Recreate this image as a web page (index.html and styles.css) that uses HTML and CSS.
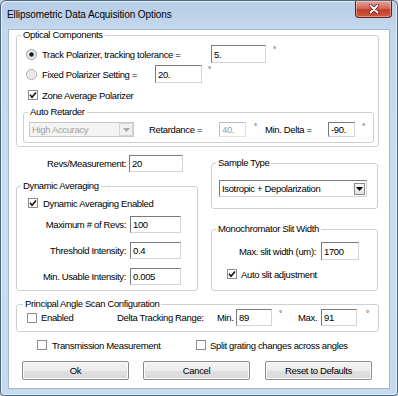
FILE: index.html
```html
<!DOCTYPE html>
<html>
<head>
<meta charset="utf-8">
<title>Ellipsometric Data Acquisition Options</title>
<link rel="stylesheet" href="styles.css">
</head>
<body>
<div class="window">
  <div class="titlebar">
    <span class="title">Ellipsometric Data Acquisition Options</span>
    <span class="close"><svg width="14" height="10" viewBox="0 0 14 10"><path d="M3.5 1.5 L10.5 8.5 M10.5 1.5 L3.5 8.5" stroke="#5a1410" stroke-width="3.2" stroke-linecap="round"/><path d="M3.5 1.5 L10.5 8.5 M10.5 1.5 L3.5 8.5" stroke="#fff" stroke-width="2" stroke-linecap="round"/></svg></span>
  </div>
  <div class="client">
    <fieldset class="group optical">
      <legend>Optical Components</legend>
      <div class="row r-track">
        <svg class="radio" width="11" height="11" viewBox="0 0 11 11"><circle cx="5.5" cy="5.5" r="5" fill="#f2f2f2" stroke="#9a9a9a"/><circle cx="5.5" cy="5.5" r="3.6" fill="#e4e4e4"/><circle cx="5.5" cy="5.5" r="2.2" fill="#1c1c1c"/></svg>
        <span class="lbl w-track">Track Polarizer, tracking tolerance =</span>
        <span class="edit w-tol">5.</span>
        <span class="deg d-tol">°</span>
      </div>
      <div class="row r-fixed">
        <svg class="radio" width="11" height="11" viewBox="0 0 11 11"><circle cx="5.5" cy="5.5" r="5" fill="#f2f2f2" stroke="#a6a6a6"/><circle cx="5.5" cy="5.5" r="3.6" fill="#e8e8e8"/></svg>
        <span class="lbl w-fixed">Fixed Polarizer Setting =</span>
        <span class="edit w-fix">20.</span>
        <span class="deg d-fix">°</span>
      </div>
      <div class="row r-zone">
        <svg class="cb cb-zone" width="10" height="10" viewBox="0 0 10 10"><rect x="0.5" y="0.5" width="9" height="9" fill="#fff" stroke="#8c8c8c"/><path d="M2 4.8 L4 7.2 L8 2.4" fill="none" stroke="#111" stroke-width="1.6"/></svg>
        <span class="lbl">Zone Average Polarizer</span>
      </div>
      <fieldset class="group retarder">
        <legend>Auto Retarder</legend>
        <div class="row r-ret">
          <span class="combo disabled w-acc"><span class="combo-text">High Accuracy</span><span class="combo-btn"><svg width="7" height="4" viewBox="0 0 7 4"><path d="M0 0 H7 L3.5 4 Z" fill="#a8a8a8"/></svg></span></span>
          <span class="lbl w-retl">Retardance =</span>
          <span class="edit disabled w-ret">40.</span>
          <span class="deg d-ret">°</span>
          <span class="lbl w-mdl">Min. Delta =</span>
          <span class="edit w-ret">-90.</span>
          <span class="deg d-md">°</span>
        </div>
      </fieldset>
    </fieldset>

    <div class="middle">
      <div class="col-left">
        <div class="row r-revs">
          <span class="lbl rlabel w-revs">Revs/Measurement:</span>
          <span class="edit w-revsin">20</span>
        </div>
        <fieldset class="group dyn">
          <legend>Dynamic Averaging</legend>
          <div class="row r-dyncb">
            <svg class="cb cb-dyn" width="10" height="10" viewBox="0 0 10 10"><rect x="0.5" y="0.5" width="9" height="9" fill="#fff" stroke="#8c8c8c"/><path d="M2 4.8 L4 7.2 L8 2.4" fill="none" stroke="#111" stroke-width="1.6"/></svg>
            <span class="lbl">Dynamic Averaging Enabled</span>
          </div>
          <div class="row r-dyn r-first">
            <span class="lbl rlabel w-dyn">Maximum # of Revs:</span>
            <span class="edit w-dynin">100</span>
          </div>
          <div class="row r-dyn">
            <span class="lbl rlabel w-dyn">Threshold Intensity:</span>
            <span class="edit w-dynin">0.4</span>
          </div>
          <div class="row r-dyn">
            <span class="lbl rlabel w-dyn">Min. Usable Intensity:</span>
            <span class="edit w-dynin">0.005</span>
          </div>
        </fieldset>
      </div>
      <div class="col-right">
        <fieldset class="group sample">
          <legend>Sample Type</legend>
          <span class="combo w-sample"><span class="combo-text">Isotropic + Depolarization</span><span class="combo-btn"><svg width="7" height="4" viewBox="0 0 7 4"><path d="M0 0 H7 L3.5 4 Z" fill="#000"/></svg></span></span>
        </fieldset>
        <fieldset class="group mono">
          <legend>Monochromator Slit Width</legend>
          <div class="row r-slit">
            <span class="lbl rlabel w-slit">Max. slit width (um):</span>
            <span class="edit w-slitin">1700</span>
          </div>
          <div class="row r-auto">
            <svg class="cb cb-auto" width="10" height="10" viewBox="0 0 10 10"><rect x="0.5" y="0.5" width="9" height="9" fill="#fff" stroke="#8c8c8c"/><path d="M2 4.8 L4 7.2 L8 2.4" fill="none" stroke="#111" stroke-width="1.6"/></svg>
            <span class="lbl">Auto slit adjustment</span>
          </div>
        </fieldset>
      </div>
    </div>

    <fieldset class="group principal">
      <legend>Principal Angle Scan Configuration</legend>
      <div class="row r-pa">
        <svg class="cb cb-en" width="10" height="10" viewBox="0 0 10 10"><rect x="0.5" y="0.5" width="9" height="9" fill="#fff" stroke="#8c8c8c"/></svg>
        <span class="lbl w-en">Enabled</span>
        <span class="lbl w-dtr">Delta Tracking Range:</span>
        <span class="lbl w-min">Min.</span>
        <span class="edit w-pa">89</span>
        <span class="deg d-pa">°</span>
        <span class="lbl w-max">Max.</span>
        <span class="edit w-pa">91</span>
        <span class="deg d-pa2">°</span>
      </div>
    </fieldset>

    <div class="row r-checks">
      <svg class="cb cb-trans" width="10" height="10" viewBox="0 0 10 10"><rect x="0.5" y="0.5" width="9" height="9" fill="#fff" stroke="#8c8c8c"/></svg>
      <span class="lbl w-trans">Transmission Measurement</span>
      <svg class="cb" width="10" height="10" viewBox="0 0 10 10"><rect x="0.5" y="0.5" width="9" height="9" fill="#fff" stroke="#8c8c8c"/></svg>
      <span class="lbl l-split">Split grating changes across angles</span>
    </div>

    <div class="buttons">
      <span class="btn b-ok">Ok</span>
      <span class="btn b-cancel">Cancel</span>
      <span class="btn b-reset">Reset to Defaults</span>
    </div>
  </div>
</div>
</body>
</html>
```

FILE: styles.css
```css
* { box-sizing: border-box; }
html, body { margin: 0; padding: 0; }
body {
  width: 398px;
  height: 396px;
  overflow: hidden;
  background: #c9d1da;
  font-family: "Liberation Sans", Arial, sans-serif;
  font-size: 9.5px;
  letter-spacing: -0.35px;
  color: #000;
}
.window {
  width: 398px;
  height: 396px;
  border: 1px solid #4f6680;
  border-radius: 6px 6px 4px 4px;
  background: linear-gradient(180deg, #b6cde6 0px, #c4d8ee 30px, #cadcf0 200px, #c6daef 396px);
  box-shadow: inset 1px 1px 0 #e6f0fa, inset -1px -1px 0 #e6f0fa;
}
.titlebar {
  height: 28px;
  display: flex;
  align-items: flex-start;
  padding-left: 6px;
}
.title {
  margin-top: 7px;
  font-size: 10px;
  line-height: 13px;
  letter-spacing: -0.1px;
  color: #000;
}
.close {
  margin-left: auto;
  margin-right: 5px;
  width: 37px;
  height: 17px;
  border: 1px solid #6b1e17;
  border-top: none;
  border-radius: 0 0 4px 4px;
  background: linear-gradient(180deg, #e6a395 0%, #d5695a 45%, #c13d2c 55%, #cf5a3e 100%);
  display: flex;
  align-items: center;
  justify-content: center;
  box-shadow: inset 0 0 0 1px rgba(255,255,255,0.35);
}
.client {
  margin: 0 7px;
  width: 382px;
  height: 360px;
  border: 1px solid #a4b8ce;
  background: #ffffff;
  padding: 0 10px 0 7px;
}
.group {
  margin: 0;
  padding: 0;
  min-width: 0;
  border: 1px solid #cdd1d4;
  border-radius: 3px;
}
.group > legend {
  padding: 0 2px;
  margin-left: 4px;
  height: 10px;
  line-height: 10px;
}
.row {
  display: flex;
  align-items: center;
}
.lbl { white-space: nowrap; line-height: 11px; }
.rlabel { text-align: right; }
.edit {
  height: 17px;
  background: #fff;
  border: 1px solid;
  border-color: #7a7a7a #d4d4d4 #d4d4d4 #7a7a7a;
  padding-left: 2px;
  line-height: 13px;
  display: flex;
  align-items: center;
  white-space: nowrap;
}
.edit.disabled {
  color: #9c9c9c;
  border-color: #bdbdbd #e2e2e2 #e2e2e2 #bdbdbd;
}
.deg {
  align-self: flex-start;
  line-height: 8px;
  font-size: 8px;
  margin-top: 1px;
}
.cb, .radio { flex: none; display: block; }

/* Optical components */
.optical { padding: 0 4px 3px 0; }
.r-track { margin-top: 5px; height: 18px; }
.r-track .edit, .r-fixed .edit { height: 18px; }
.radio { margin-left: 9px; margin-right: 5px; }
.w-track { width: 169px; }
.w-tol { width: 55px; }
.d-tol { margin-left: 7px; }
.r-fixed { margin-top: 2px; height: 18px; }
.w-fixed { width: 113px; }
.w-fix { width: 47px; }
.d-fix { margin-left: 6px; }
.r-zone { margin-top: 3px; height: 18px; }
.cb-zone { margin-left: 11px; margin-right: 4px; }

.retarder { margin: 3px 0 0 6px; padding: 0 0 5px 0; }
.r-ret { margin-top: 5px; height: 15px; }
.r-ret .edit { height: 15px; }
.w-acc { margin-left: 5px; width: 105px; }
.w-retl { width: 70px; margin-left: 15px; }
.w-ret { width: 27px; }
.d-ret { width: 19px; padding-left: 8px; }
.w-mdl { width: 63px; }
.d-md { padding-left: 7px; }

.combo {
  display: flex;
  align-items: center;
  height: 15px;
  border: 1px solid;
  border-color: #7a7a7a #d4d4d4 #d4d4d4 #7a7a7a;
  background: #fff;
}
.combo-text { flex: 1; padding-left: 2px; white-space: nowrap; line-height: 11px; }
.combo-btn {
  width: 12px;
  height: 11px;
  margin-right: 1px;
  border: 1px solid #b5b5b5;
  background: linear-gradient(180deg, #f6f6f6, #e3e3e3);
  display: flex;
  align-items: center;
  justify-content: center;
}
.combo.disabled {
  color: #a3a3a3;
  background: #f4f4f4;
  border-color: #c8c8c8;
}
.combo.disabled .combo-btn {
  border-color: #d6d6d6;
  background: #f0f0f0;
  height: 13px;
  width: 14px;
  margin-right: 0;
}

/* Middle */
.middle { display: flex; }
.col-left { width: 182px; }
.col-right { width: 167px; margin-left: 13px; }
.r-revs { margin-top: 8px; height: 17px; }
.w-revs { width: 110px; margin-right: 3px; }
.w-revsin { width: 54px; }

.dyn { margin-top: 9px; padding: 0 0 5px 0; }
.r-dyncb { margin-top: 3px; height: 18px; }
.cb-dyn { margin-left: 11px; margin-right: 5px; }
.r-dyn { margin-top: 9px; height: 17px; }
.r-dyn.r-first { margin-top: 4px; }
.w-dyn { width: 109px; margin-right: 4px; }
.w-dynin { width: 51px; }

.sample { margin-top: 11px; padding: 0 0 11px 0; }
.w-sample { margin: 12px 0 0 7px; width: 148px; height: 17px; }
.w-sample .combo-btn { width: 11px; height: 12px; margin-right: 1px; border-color: #8a8a8a; }

.mono { margin-top: 15px; padding: 0 0 7px 0; }
.r-slit { margin-top: 8px; height: 18px; }
.r-slit .edit { height: 18px; }
.w-slit { width: 104px; margin-right: 5px; }
.w-slitin { width: 38px; }
.r-auto { margin-top: 5px; height: 18px; }
.cb-auto { margin-left: 15px; margin-right: 4px; }

/* Principal angle */
.principal { margin-top: 8px; padding: 0 0 5px 0; }
.principal > legend { margin-left: 6px; }
.r-pa { height: 17px; }
.cb-en { margin-left: 10px; margin-right: 4px; }
.w-en { width: 76px; }
.w-dtr { width: 100px; }
.w-min { width: 19px; }
.w-pa { width: 36px; }
.d-pa { width: 26px; padding-left: 7px; }
.w-max { width: 23px; }
.d-pa2 { padding-left: 9px; }

.r-checks { margin-top: 6px; height: 14px; }
.cb-trans { margin-left: 21px; margin-right: 5px; }
.w-trans { width: 144px; }
.l-split { margin-left: 4px; }

/* Buttons */
.buttons { display: flex; margin-top: 9px; }
.btn {
  width: 107px;
  height: 19px;
  border: 1px solid #8b8b8b;
  border-radius: 2px;
  background: linear-gradient(180deg, #f4f4f4 0%, #ececec 50%, #e0e0e0 51%, #dadada 100%);
  box-shadow: inset 0 0 0 1px #fbfbfb;
  display: flex;
  align-items: center;
  justify-content: center;
  line-height: 11px;
}
.b-ok { margin-left: 6px; }
.b-cancel { margin-left: 14px; }
.b-reset { margin-left: 15px; }
```
